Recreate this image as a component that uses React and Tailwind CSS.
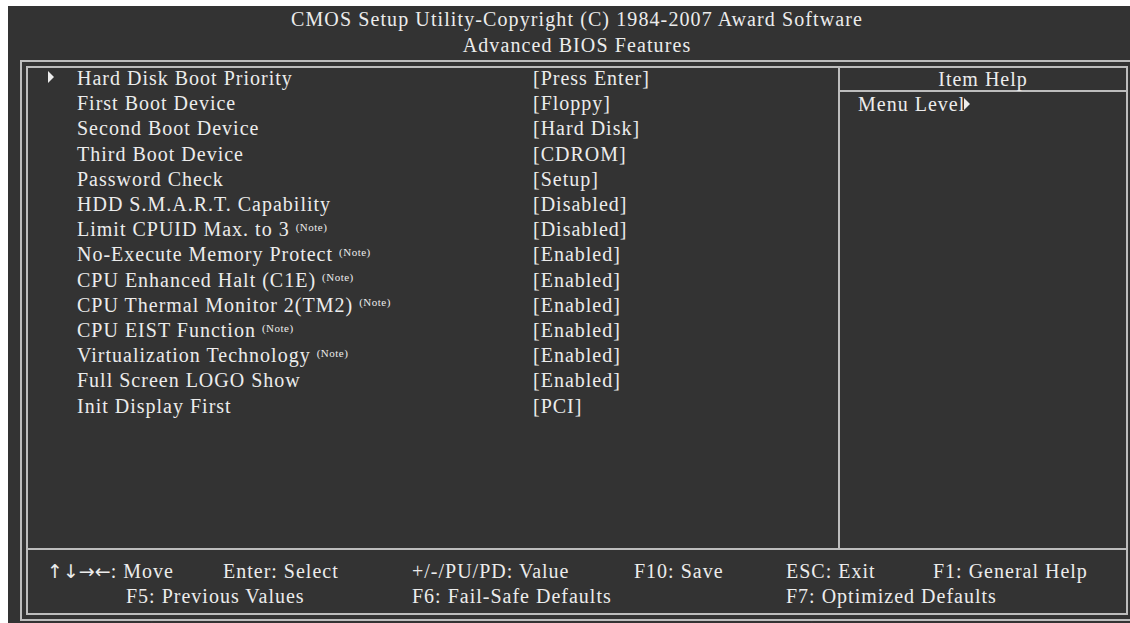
import React from "react";

const items = [
  ["Hard Disk Boot Priority", false, "[Press Enter]", true],
  ["First Boot Device", false, "[Floppy]"],
  ["Second Boot Device", false, "[Hard Disk]"],
  ["Third Boot Device", false, "[CDROM]"],
  ["Password Check", false, "[Setup]"],
  ["HDD S.M.A.R.T. Capability", false, "[Disabled]"],
  ["Limit CPUID Max. to 3", true, "[Disabled]"],
  ["No-Execute Memory Protect", true, "[Enabled]"],
  ["CPU Enhanced Halt (C1E)", true, "[Enabled]"],
  ["CPU Thermal Monitor 2(TM2)", true, "[Enabled]"],
  ["CPU EIST Function", true, "[Enabled]"],
  ["Virtualization Technology", true, "[Enabled]"],
  ["Full Screen LOGO Show", false, "[Enabled]"],
  ["Init Display First", false, "[PCI]"],
];

function Tri({ className = "" }) {
  return (
    <svg width="6" height="12" viewBox="0 0 6 12" className={className}>
      <path d="M0 0 L6 6 L0 12 Z" fill="#ececec" />
    </svg>
  );
}

export default function App() {
  return (
    <div className="w-[1130px] h-[623px] overflow-hidden bg-white font-['Liberation_Serif',serif] text-[#ececec]">
      <div className="ml-[8px] mt-[6px] w-[1140px] h-[617px] bg-[#333333] pl-[12px]">
        <div className="w-[1114px] text-center text-[20px] leading-[26px] tracking-[1.1px]">
          <div>CMOS Setup Utility-Copyright (C) 1984-2007 Award Software</div>
          <div>Advanced BIOS Features</div>
        </div>
        <div className="mt-[2px] w-[1114px] h-[561px] border-2 border-[#bdbdbd] p-[4px]">
          <div className="h-full border-2 border-[#bdbdbd] flex flex-col text-[20px] tracking-[1px]">
            <div className="h-[482px] flex border-b-2 border-[#bdbdbd]">
              <div className="w-[810px] -mt-[2px]">
                {items.map(([label, note, value, arrow]) => (
                  <div key={label} className="flex leading-[25.2px] whitespace-nowrap">
                    <div className="w-[49px] pl-[20px] flex items-center">
                      {arrow && <Tri className="-mt-[3px]" />}
                    </div>
                    <div className="w-[456px]">
                      {label}
                      {note && (
                        <>
                          {" "}
                          <sup className="text-[11px] tracking-[0.5px]">(Note)</sup>
                        </>
                      )}
                    </div>
                    <div>{value}</div>
                  </div>
                ))}
              </div>
              <div className="flex-1 border-l-2 border-[#bdbdbd]">
                <div className="h-[24px] border-b-2 border-[#bdbdbd] text-center leading-[22px]">
                  Item Help
                </div>
                <div className="pl-[18px] leading-[25.2px] flex items-center whitespace-nowrap">
                  <span>Menu Level</span>
                  <Tri className="-ml-[1px] -mt-[2px]" />
                </div>
              </div>
            </div>
            <div className="flex-1 pt-[9px] leading-[25.2px] whitespace-nowrap">
              <div className="flex pl-[19px]">
                <div className="w-[176px]">
                  <span className="font-['DejaVu_Sans',sans-serif] text-[19px] tracking-[0px]">↑↓→←</span>: Move
                </div>
                <div className="w-[189px]">Enter: Select</div>
                <div className="w-[222px]">+/-/PU/PD: Value</div>
                <div className="w-[152px]">F10: Save</div>
                <div className="w-[147px]">ESC: Exit</div>
                <div>F1: General Help</div>
              </div>
              <div className="flex pl-[98px]">
                <div className="w-[286px]">F5: Previous Values</div>
                <div className="w-[374px]">F6: Fail-Safe Defaults</div>
                <div>F7: Optimized Defaults</div>
              </div>
            </div>
          </div>
        </div>
      </div>
    </div>
  );
}
